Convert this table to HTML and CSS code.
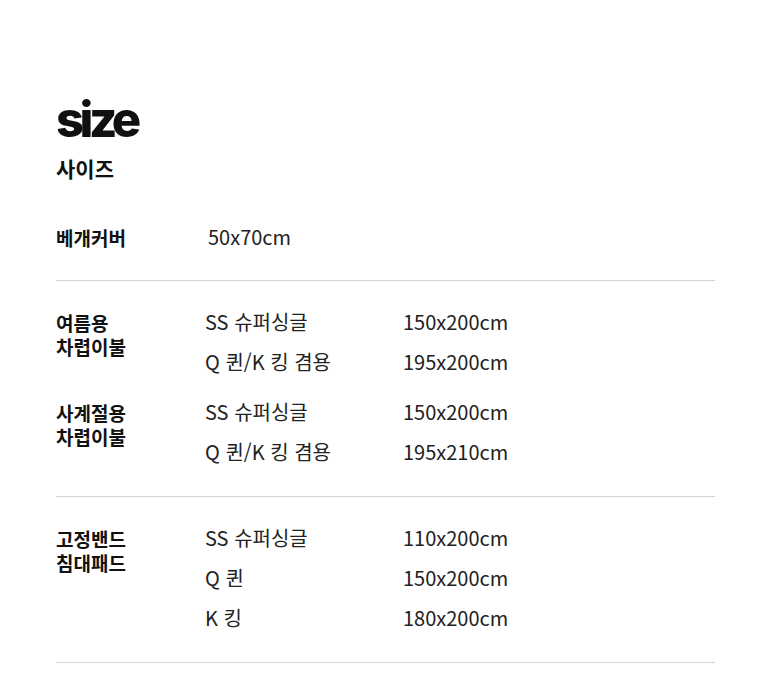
FILE: index.html
```html
<!DOCTYPE html>
<html lang="ko">
<head>
<meta charset="utf-8">
<link rel="stylesheet" href="styles.css">
</head>
<body>
<main class="page">
  <h1 class="title">size</h1>
  <h2 class="subtitle">사이즈</h2>

  <section class="section section-first">
    <div class="group">
      <div class="label">베개커버</div>
      <div class="rows">
        <div class="row"><span class="name single">50x70cm</span></div>
      </div>
    </div>
  </section>

  <section class="section">
    <div class="group">
      <div class="label">여름용<br>차렵이불</div>
      <div class="rows">
        <div class="row"><span class="name">SS 슈퍼싱글</span><span class="dim">150x200cm</span></div>
        <div class="row"><span class="name">Q 퀸/K 킹 겸용</span><span class="dim">195x200cm</span></div>
      </div>
    </div>
    <div class="group">
      <div class="label">사계절용<br>차렵이불</div>
      <div class="rows">
        <div class="row"><span class="name">SS 슈퍼싱글</span><span class="dim">150x200cm</span></div>
        <div class="row"><span class="name">Q 퀸/K 킹 겸용</span><span class="dim">195x210cm</span></div>
      </div>
    </div>
  </section>

  <section class="section">
    <div class="group">
      <div class="label">고정밴드<br>침대패드</div>
      <div class="rows">
        <div class="row"><span class="name">SS 슈퍼싱글</span><span class="dim">110x200cm</span></div>
        <div class="row"><span class="name">Q 퀸</span><span class="dim">150x200cm</span></div>
        <div class="row"><span class="name">K 킹</span><span class="dim">180x200cm</span></div>
      </div>
    </div>
  </section>
</main>
</body>
</html>
```

FILE: styles.css
```css
* { box-sizing: border-box; }
html, body { margin: 0; padding: 0; background: #fff; }
body {
  font-family: "Noto Sans CJK KR", "Noto Sans", sans-serif;
  color: #111;
}
.page {
  width: 659px;
  margin-left: 56px;
  padding-top: 94px;
}
.title {
  margin: 0;
  font-family: "Inter", "Noto Sans", sans-serif;
  font-weight: 800;
  font-size: 49px;
  line-height: 52px;
  letter-spacing: -4.5px;
  color: #111;
}
.subtitle {
  margin: 8px 0 0;
  font-size: 21px;
  font-weight: 700;
  line-height: 28px;
  color: #111;
}
.section {
  border-bottom: 1px solid #d4d4d4;
  padding: 22px 0 23px;
  display: flex;
  flex-direction: column;
  gap: 10px;
}
.section-first {
  padding-top: 36px;
  padding-bottom: 22px;
}
.group {
  display: flex;
}
.label {
  width: 149px;
  flex-shrink: 0;
  font-size: 19px;
  font-weight: 700;
  line-height: 24px;
  padding-top: 8px;
  color: #111;
}
.rows {
  display: flex;
  flex-direction: column;
}
.row {
  display: flex;
  height: 40px;
  align-items: center;
  padding-bottom: 4px;
  font-size: 20px;
  color: #222;
}
.name { width: 198px; }
.name.single { padding-left: 3px; }
```
